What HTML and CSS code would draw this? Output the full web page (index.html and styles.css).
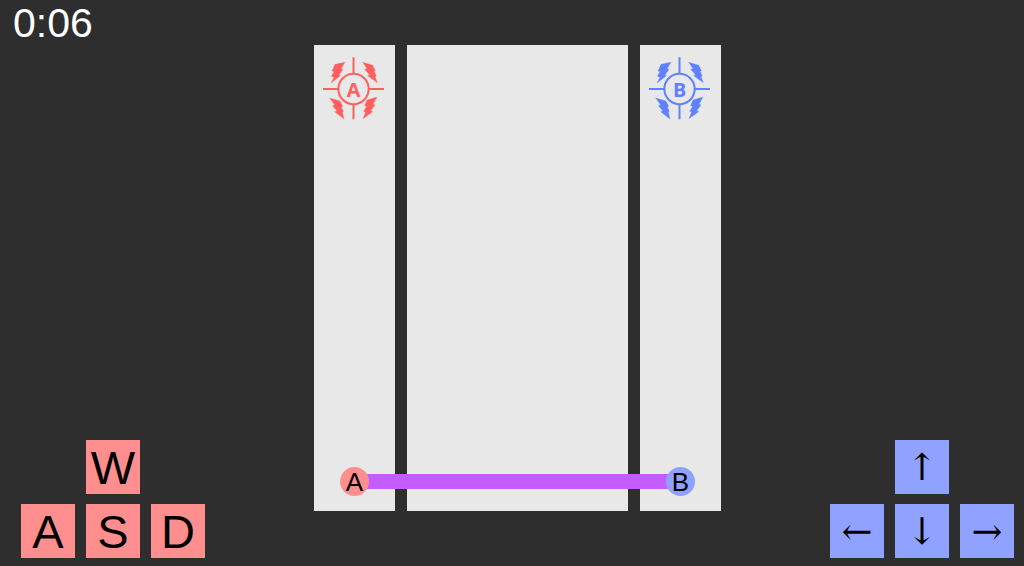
FILE: index.html
```html
<!DOCTYPE html>
<html lang="en">
<head>
<meta charset="utf-8">
<title>Linked</title>
<link rel="stylesheet" href="styles.css">
</head>
<body>
<svg class="defs" aria-hidden="true">
  <symbol id="target" viewBox="0 0 240 240">
    <g fill="none" stroke="currentColor" stroke-width="6">
      <circle cx="118.5" cy="132" r="45.5"/>
      <path d="M118.5 37V87M118.5 177V223M27 132H73M164 132H210"/>
    </g>
    <g fill="currentColor" stroke="currentColor" stroke-width="1">
      <path d="M63 58L93 52L81 71L87 73L75 90L79 92L51 114L60 97L52 94L60 80L54 78Z"/>
      <path d="M146 52L176 61L184 77L180 79L187 93L183 95L190 113L161 92L167 90L152 73L159 71Z"/>
      <path d="M47 159L78 168L86 184L82 186L88 199L85 201L90 222L62 200L69 198L55 182L62 180Z"/>
      <path d="M189 156L159 165L152 182L158 184L149 199L155 201L147 221L176 200L170 197L183 180L177 178Z"/>
    </g>
  </symbol>
</svg>
<header class="top"><time class="timer">0:06</time></header>
<main class="game">
  <div class="pad pad-a">
    <button class="key up">W</button>
    <button class="key">A</button>
    <button class="key">S</button>
    <button class="key">D</button>
  </div>
  <section class="stage">
    <div class="lane">
      <svg class="goal goal-a" viewBox="0 0 240 240"><use href="#target"/><text class="mark" x="118.500" y="155">A</text></svg>
    </div>
    <div class="lane"></div>
    <div class="lane">
      <svg class="goal goal-b" viewBox="0 0 240 240"><use href="#target"/><text class="mark" x="118.500" y="155">B</text></svg>
    </div>
    <div class="link">
      <span class="ball ball-a">A</span>
      <span class="beam"></span>
      <span class="ball ball-b">B</span>
    </div>
  </section>
  <div class="pad pad-b">
    <button class="key up">↑</button>
    <button class="key">←</button>
    <button class="key">↓</button>
    <button class="key">→</button>
  </div>
</main>
</body>
</html>
```
FILE: styles.css
```css
* { box-sizing: border-box; }

body {
  margin: 0;
  min-height: 100vh;
  display: flex;
  flex-direction: column;
  background: #2e2e2e;
  font-family: "Liberation Sans", Arial, sans-serif;
}

.defs { display: none; }

.top {
  height: 45px;
  padding-left: 13px;
  color: #fff;
}

.timer {
  font-size: 41px;
  line-height: 46px;
}

.game {
  flex: 1;
  display: grid;
  grid-template-columns: 1fr auto 1fr;
  padding: 0 10px 8px 21px;
}

.pad {
  align-self: end;
  display: grid;
  grid-template-columns: repeat(3, 54px);
  gap: 10px 11px;
}

.pad-a { justify-content: start; --key: #ff8f8f; }
.pad-b { justify-content: end; --key: #8fa2ff; }

.key {
  height: 54px;
  padding: 0;
  border: 0;
  background: var(--key);
  color: #000;
  font: 47px/56px "Liberation Sans", Arial, sans-serif;
}

.pad-b .key { font: 37px/56px "DejaVu Serif", serif; }

.up { grid-column: 2; }
.up + .key { grid-column: 1; }

.stage {
  position: relative;
  display: grid;
  grid-template-columns: 81px 221px 81px;
  gap: 12px;
  margin-bottom: 47px;
}

.lane { background: #e8e8e8; }

.goal {
  display: block;
  width: 80px;
  height: 80px;
}

.goal-a { color: #ff5f5f; }
.goal-b { color: #5f80ff; }

.mark {
  fill: currentColor;
  font: 700 59px "Open Sans", sans-serif;
  text-anchor: middle;
}

.link {
  position: absolute;
  left: 26px;
  right: 26px;
  bottom: 15px;
  display: flex;
  align-items: center;
}

.beam {
  flex: 1;
  height: 15px;
  margin: 0 -8px;
  background: #c45cff;
}

.ball {
  z-index: 1;
  width: 29px;
  height: 29px;
  border-radius: 50%;
  font-size: 26px;
  line-height: 30px;
  text-align: center;
}

.ball-a { background: #ff8f8f; }
.ball-b { background: #8fa2ff; }
```
